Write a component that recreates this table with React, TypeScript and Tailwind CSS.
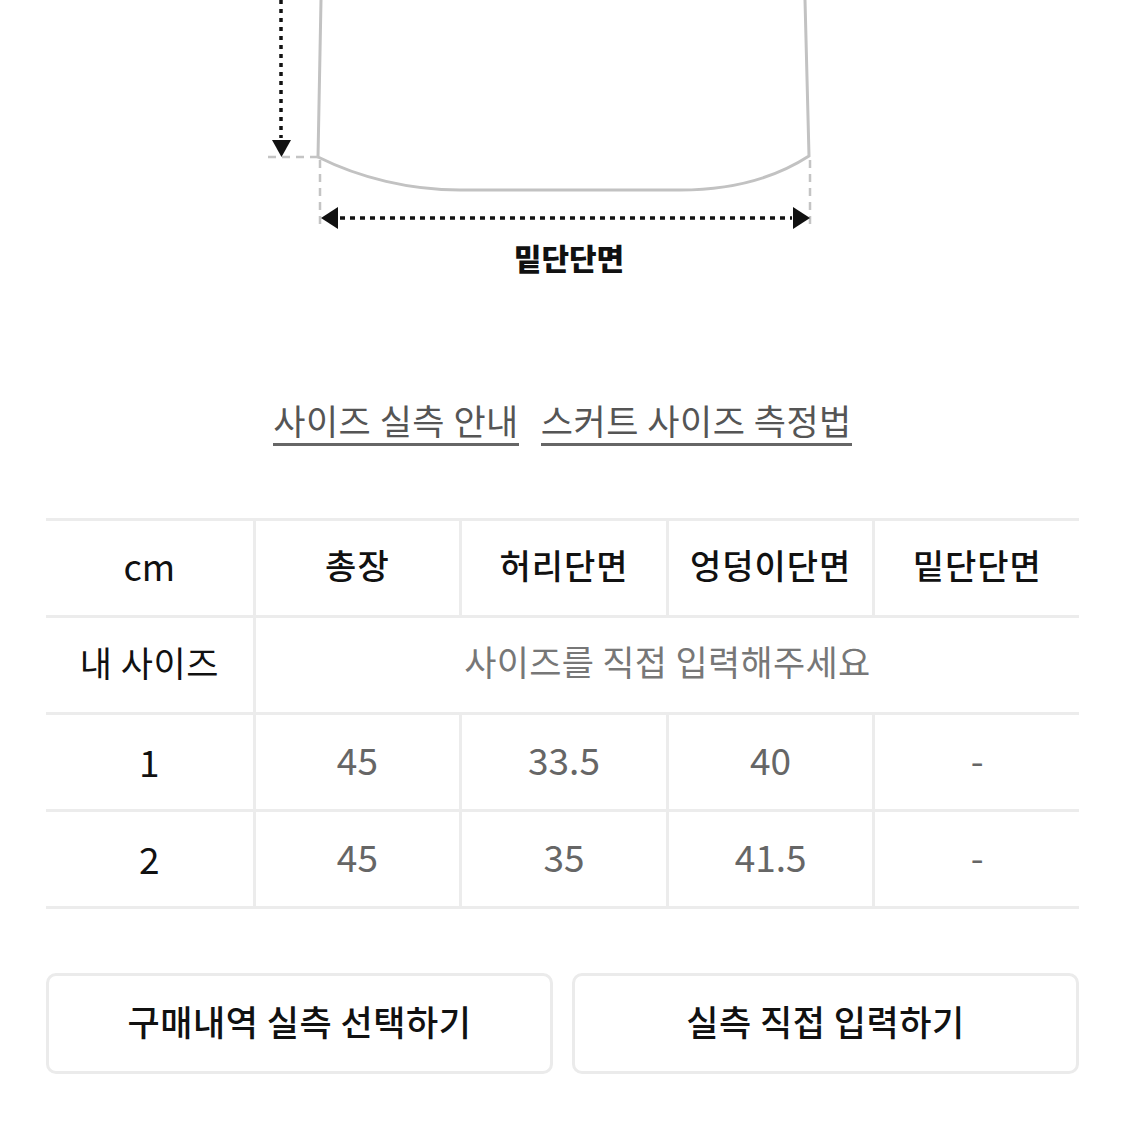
import React from "react";

const FONT = { fontFamily: '"Noto Sans CJK KR", "Noto Sans", sans-serif' };

function Diagram() {
  return (
    <svg width="1125" height="300" viewBox="0 0 1125 300" className="block">
      {/* skirt outline */}
      <path
        d="M321,0 L318,157 C360,178 410,190 460,190 L680,190 C730,190 775,178 809,156 L805,0"
        fill="none"
        stroke="#c2c2c2"
        strokeWidth="3"
      />
      {/* vertical dotted arrow */}
      <line x1="281" y1="0" x2="281" y2="138" stroke="#111" strokeWidth="3.5" strokeDasharray="4 5" />
      <polygon points="272,140 291,140 281.5,157" fill="#111" />
      {/* guide dashes */}
      <line x1="268" y1="157" x2="318" y2="157" stroke="#c4c4c4" strokeWidth="2.5" strokeDasharray="8 6" />
      <line x1="320" y1="160" x2="320" y2="228" stroke="#c4c4c4" strokeWidth="2.5" strokeDasharray="8 6" />
      <line x1="810" y1="160" x2="810" y2="228" stroke="#c4c4c4" strokeWidth="2.5" strokeDasharray="8 6" />
      {/* horizontal dotted arrow */}
      <line x1="340" y1="218" x2="792" y2="218" stroke="#111" strokeWidth="3.5" strokeDasharray="5 5" />
      <polygon points="321,218 338,207 338,229" fill="#111" />
      <polygon points="810,218 793,207 793,229" fill="#111" />
      <text
        x="569"
        y="270"
        textAnchor="middle"
        fontSize="30"
        fontWeight="900"
        fill="#111"
        style={FONT}
      >
        밑단단면
      </text>
    </svg>
  );
}

const cols = ["총장", "허리단면", "엉덩이단면", "밑단단면"];
const rows = [
  { label: "1", v: ["45", "33.5", "40", "-"] },
  { label: "2", v: ["45", "35", "41.5", "-"] },
];

function Cell({ children, first, className = "" }: { children: React.ReactNode; first?: boolean; className?: string }) {
  return (
    <div
      className={`flex items-center justify-center h-[94px] ${first ? "" : "border-l-[3px] border-[#ececec]"} ${className}`}
    >
      {children}
    </div>
  );
}

export default function App() {
  return (
    <div className="w-[1125px] h-[1125px] bg-white overflow-hidden" style={FONT}>
      <Diagram />

      <div className="flex justify-center gap-[22px] mt-[102px] text-[35px] text-[#555] leading-none">
        <span className="border-b-[3px] border-[#666] pb-[6px] tracking-[0.5px]">사이즈 실측 안내</span>
        <span className="border-b-[3px] border-[#666] pb-[6px] tracking-[0.5px]">스커트 사이즈 측정법</span>
      </div>

      <div className="mx-[46px] mt-[72px]">
        {/* header */}
        <div className="grid grid-cols-5 border-t-[3px] border-[#ececec]">
          <Cell first>
            <span className="text-[36px] text-[#111] mb-[6px]">cm</span>
          </Cell>
          {cols.map((c) => (
            <Cell key={c}>
              <span className="text-[34px] text-[#111] font-medium tracking-[1px] mb-[8px]">{c}</span>
            </Cell>
          ))}
        </div>
        {/* my size */}
        <div className="grid grid-cols-5 border-t-[3px] border-[#ececec]">
          <Cell first>
            <span className="text-[35px] text-[#111] tracking-[0.5px] mb-[6px]">내 사이즈</span>
          </Cell>
          <Cell className="col-span-4">
            <span className="text-[35px] text-[#777] tracking-[0.3px] mb-[8px]">사이즈를 직접 입력해주세요</span>
          </Cell>
        </div>
        {rows.map((r) => (
          <div key={r.label} className="grid grid-cols-5 border-t-[3px] border-[#ececec]">
            <Cell first>
              <span className="text-[37px] text-[#111]">{r.label}</span>
            </Cell>
            {r.v.map((v, i) => (
              <Cell key={i}>
                <span className="text-[37px] text-[#666] mb-[4px]">{v}</span>
              </Cell>
            ))}
          </div>
        ))}
        <div className="border-t-[3px] border-[#ececec]" />

        <div className="flex gap-[19px] mt-[64px]">
          <button className="flex-1 h-[101px] rounded-[10px] border-[3px] border-[#ebebeb] bg-white flex items-center justify-center text-[35px] text-[#111] font-medium tracking-[0.5px] pb-[4px]">
            구매내역 실측 선택하기
          </button>
          <button className="flex-1 h-[101px] rounded-[10px] border-[3px] border-[#ebebeb] bg-white flex items-center justify-center text-[35px] text-[#111] font-medium tracking-[0.5px] pb-[4px]">
            실측 직접 입력하기
          </button>
        </div>
      </div>
    </div>
  );
}
